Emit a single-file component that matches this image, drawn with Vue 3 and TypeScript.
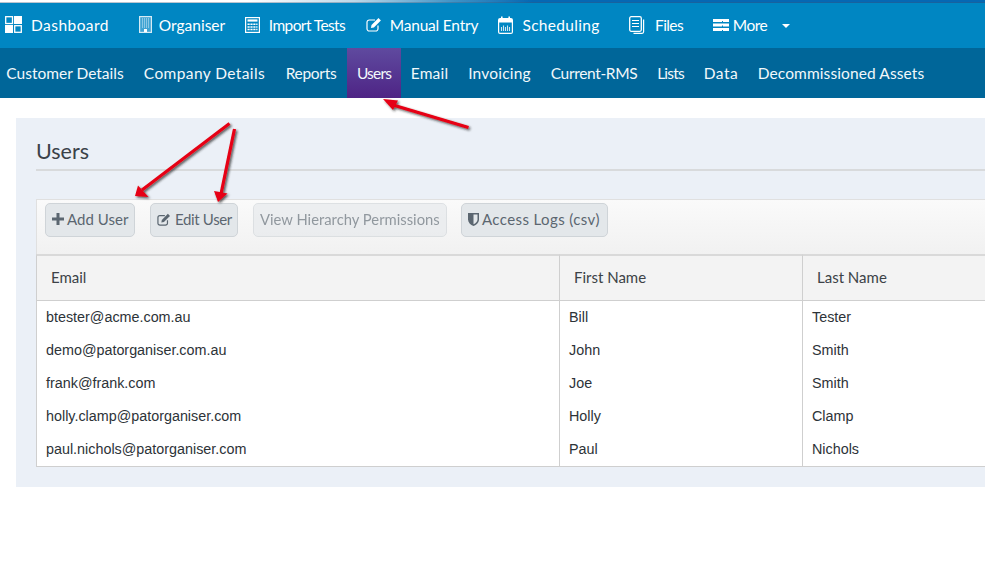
<script setup lang="ts">
const mainNav = [
  { label: 'Dashboard', icon: 'dash', cls: 'n-dash', w: 78, ls: 0.45 },
  { label: 'Organiser', icon: 'org', cls: 'n-org', w: 66, ls: 0 },
  { label: 'Import Tests', icon: 'calc', cls: 'n-imp', w: 78, ls: -0.6 },
  { label: 'Manual Entry', icon: 'edit', cls: 'n-man', w: 88, ls: -0.2 },
  { label: 'Scheduling', icon: 'cal', cls: 'n-sch', w: 78, ls: 0.3 },
  { label: 'Files', icon: 'files', cls: 'n-fil', w: 28, ls: -0.6 },
]
const subNav = [
  { label: 'Customer Details', w: 134, ls: 0 },
  { label: 'Company Details', w: 141, ls: 0.4 },
  { label: 'Reports', w: 72, ls: -0.3 },
  { label: 'Users', w: 54, ls: -0.8 },
  { label: 'Email', w: 57, ls: 0.2 },
  { label: 'Invoicing', w: 83, ls: 0.2 },
  { label: 'Current-RMS', w: 106, ls: -0.35 },
  { label: 'Lists', w: 47, ls: -0.8 },
  { label: 'Data', w: 54, ls: 0.5 },
  { label: 'Decommissioned Assets', w: 186, ls: 0.1 },
]
const rows = [
  ['btester@acme.com.au', 'Bill', 'Tester'],
  ['demo@patorganiser.com.au', 'John', 'Smith'],
  ['frank@frank.com', 'Joe', 'Smith'],
  ['holly.clamp@patorganiser.com', 'Holly', 'Clamp'],
  ['paul.nichols@patorganiser.com', 'Paul', 'Nichols'],
]
</script>

<template>
  <div class="page">
    <div class="strip"></div>
    <nav class="main">
      <a v-for="n in mainNav" :key="n.label" class="mi" :class="n.cls">
        <svg v-if="n.icon === 'dash'" class="ic" width="17" height="17" viewBox="0 0 17 17">
          <rect x="0.7" y="0.7" width="6.800" height="6.800" fill="none" stroke="#fff" stroke-width="1.300"/>
          <rect x="9" y="0" width="8" height="8" fill="#fff"/>
          <rect x="0" y="9" width="8" height="8" fill="#fff"/>
          <rect x="9.700" y="9.700" width="6.600" height="6.600" fill="none" stroke="#fff" stroke-width="1.300"/>
        </svg>
        <svg v-else-if="n.icon === 'org'" class="ic" width="13" height="17" viewBox="0 0 13 17">
          <rect x="0.6" y="0.6" width="11.800" height="15.800" fill="#3fa3d3" stroke="#d5ebf5" stroke-width="1.200"/>
          <path d="M3 3h7M3 5h7M3 7h7M3 9h7M3 11h7" stroke="#d5ebf5" stroke-width="1.100" stroke-dasharray="1 1"/>
          <rect x="5" y="13" width="3" height="3" fill="#fff"/>
        </svg>
        <svg v-else-if="n.icon === 'calc'" class="ic" width="15" height="16" viewBox="0 0 15 16">
          <rect x="0.6" y="0.6" width="13.800" height="14.800" fill="none" stroke="#fff" stroke-width="1.200"/>
          <rect x="2.500" y="2.400" width="10" height="2.200" fill="#fff"/>
          <path d="M2.500 7.300h10M2.500 9.900h10M2.500 12.500h10" stroke="#fff" stroke-width="1.500" stroke-dasharray="2.200 .7" fill="none"/>
        </svg>
        <svg v-else-if="n.icon === 'edit'" class="ic" width="16" height="15" viewBox="0 0 16 15">
          <path d="M12 8.500v3.200A2.300 2.300 0 0 1 9.700 14H3.300A2.300 2.300 0 0 1 1 11.700V5.300A2.300 2.300 0 0 1 3.300 3H9" fill="none" stroke="#fff" stroke-width="1.200"/>
          <path d="M5.500 8 12.500 1l2.400 2.400-7 7-3 .6z" fill="#fff"/>
        </svg>
        <svg v-else-if="n.icon === 'cal'" class="ic" width="15" height="18" viewBox="0 0 15 18">
          <rect x="0.6" y="2.600" width="13.800" height="14.800" rx="1.500" fill="none" stroke="#fff" stroke-width="1.200"/>
          <rect x="1" y="3" width="13" height="3.500" fill="#fff"/>
          <rect x="3" y="0.5" width="1.600" height="4" fill="#fff"/>
          <rect x="10.400" y="0.5" width="1.600" height="4" fill="#fff"/>
          <path d="M3.500 15V11M5.500 15V9.500M7.500 15V11M9.500 15V9.500M11.500 15V11" stroke="#cfe6f2" stroke-width="1.100"/>
        </svg>
        <svg v-else class="ic" width="16" height="18" viewBox="0 0 16 18">
          <rect x="0.7" y="0.7" width="11.600" height="14.600" rx="1.500" fill="none" stroke="#fff" stroke-width="1.300"/>
          <path d="M3 4.500h7M3 7.500h7M3 10.500h7" stroke="#fff" stroke-width="1.200"/>
          <path d="M14.600 3.500v12.300a1.500 1.500 0 0 1-1.500 1.500H4.500" fill="none" stroke="#fff" stroke-width="1.200"/>
        </svg>
        <span class="ml" :style="{ width: n.w + 'px', letterSpacing: n.ls + 'px' }">{{ n.label }}</span>
      </a>
      <a class="mi n-more">
        <svg class="ic" width="16" height="12" viewBox="0 0 16 12">
          <path d="M0 0h16v3H10V2H9v1H0zM0 4.500h16v3H10v-1H9v1H0zM0 9h16v3H10v-1H9v1H0z" fill="#fff"/>
        </svg>
        <span class="ml more-label">More</span>
        <i class="caret"></i>
      </a>
    </nav>
    <nav class="sub">
      <a
        v-for="s in subNav"
        :key="s.label"
        class="si"
        :class="{ active: s.label === 'Users' }"
        :style="{ width: s.w + 'px', letterSpacing: s.ls + 'px' }"
      >{{ s.label }}</a>
    </nav>

    <main class="panel">
      <h1>Users</h1>
      <div class="toolbar">
        <button class="btn b-add">
          <svg width="12" height="12" viewBox="0 0 12 12"><path d="M4.500 0h3v4.500H12v3H7.500V12h-3V7.500H0v-3h4.500z" fill="#5b6670"/></svg>
          Add User
        </button>
        <button class="btn b-edit">
          <svg width="14" height="13" viewBox="0 0 16 15">
            <path d="M12 8.500v3.200A2.300 2.300 0 0 1 9.700 14H3.300A2.300 2.300 0 0 1 1 11.700V5.300A2.300 2.300 0 0 1 3.300 3H9" fill="none" stroke="#5b6670" stroke-width="1.400"/>
            <path d="M5.500 8 12.500 1l2.400 2.400-7 7-3 .6z" fill="#5b6670"/>
          </svg>
          Edit User
        </button>
        <button class="btn b-view">View Hierarchy Permissions</button>
        <button class="btn b-log">
          <svg width="11" height="13" viewBox="0 0 11 13"><path d="M0 0h11v6.500c0 3-2.500 5.300-5.500 6.500C2.500 11.800 0 9.500 0 6.500z" fill="#5b6670"/><path d="M5.500 1.500h4v5c0 2-1.800 3.800-4 4.800z" fill="#e3e7ea"/></svg>
          Access Logs (csv)
        </button>
      </div>
      <table class="grid">
        <colgroup><col class="c1" /><col class="c2" /><col /></colgroup>
        <thead>
          <tr><th>Email</th><th>First Name</th><th>Last Name</th></tr>
        </thead>
        <tbody>
          <tr v-for="r in rows" :key="r[0]">
            <td v-for="c in r" :key="c">{{ c }}</td>
          </tr>
        </tbody>
      </table>
    </main>

    <svg class="arrows" width="985" height="583" viewBox="0 0 985 583">
      <defs>
        <filter id="sh" x="-30%" y="-30%" width="160%" height="160%">
          <feDropShadow dx="1.500" dy="1.500" stdDeviation="1.200" flood-color="#222" flood-opacity="0.75"/>
        </filter>
      </defs>
      <g filter="url(#sh)">
        <path d="M468.500 127.500 393 105" stroke="#e60012" stroke-width="3.200" fill="none"/>
        <path d="M383 99 398 100.500 393 110z" fill="#e60012"/>
        <path d="M229.500 123.500 142 190" stroke="#e60012" stroke-width="3.200" fill="none"/>
        <path d="M135 196 138 185.500 148.500 197z" fill="#e60012"/>
        <path d="M234.500 129 221 194" stroke="#e60012" stroke-width="3.200" fill="none"/>
        <path d="M218 202 214 191 227.500 193.500z" fill="#e60012"/>
      </g>
    </svg>
  </div>
</template>

<style>
html, body { margin: 0; background: #fff; }
</style>

<style scoped>
.page {
  position: relative;
  width: 985px;
  height: 583px;
  overflow: hidden;
  background: #fff;
  font-family: Lato, "Open Sans", sans-serif;
}
.strip {
  height: 3px;
  background: linear-gradient(90deg, #ffffff 0%, #ffffff 25%, #bcd8e8 36%, #3f93c6 46%, #0668b3 54%, #0668b3 100%);
  box-shadow: inset 0 -1px 0 rgba(60, 90, 120, 0.35);
}
.main {
  height: 45px;
  box-sizing: border-box;
  padding-bottom: 2px;
  background: #0086c2;
  display: flex;
  align-items: center;
  color: #fff;
  font-size: 15.500px;
}
.mi { display: flex; align-items: center; white-space: nowrap; }
.ic { flex: none; }
.ml { display: flex; justify-content: center; }
.n-dash { margin-left: 5px; gap: 9px; }
.n-org { margin-left: 30px; gap: 7px; }
.n-imp { margin-left: 20px; gap: 8px; }
.n-man { margin-left: 20px; gap: 8px; }
.n-sch { margin-left: 20px; gap: 9px; }
.n-fil { margin-left: 29px; gap: 10px; }
.n-more { margin-left: 30px; gap: 4px; }
.more-label { width: 34px; letter-spacing: -0.5px; }
.caret {
  margin-left: 11px;
  margin-top: 2px;
  width: 0;
  height: 0;
  border-left: 4px solid transparent;
  border-right: 4px solid transparent;
  border-top: 4px solid #fff;
}
.sub {
  height: 50px;
  background: #006699;
  display: flex;
  align-items: stretch;
  color: #f2f8fb;
  font-size: 15.500px;
}
.si {
  flex: none;
  display: flex;
  align-items: center;
  justify-content: center;
  white-space: nowrap;
}
.si:first-child { padding-right: 4px; box-sizing: border-box; }
.si.active { background: linear-gradient(180deg, #5f4a9f 0%, #4e2485 100%); }
.panel {
  margin: 20px 0 0 16px;
  height: 369px;
  background: #ebf0f7;
  padding: 0 0 0 20px;
  box-sizing: border-box;
}
h1 {
  margin: 0;
  padding-top: 20px;
  height: 53px;
  box-sizing: border-box;
  line-height: 27px;
  font-size: 21.500px;
  font-weight: 400;
  color: #3a4249;
  border-bottom: 2px solid #d8dadc;
}
.toolbar {
  margin-top: 28px;
  height: 55px;
  box-sizing: border-box;
  background: linear-gradient(180deg, #fafafa 0%, #f1f1f1 100%);
  border: 1px solid #e0e0e0;
  border-right: 0;
  border-bottom: 0;
  display: flex;
  align-items: flex-start;
  padding: 3px 0 0 8px;
}
.btn {
  height: 34px;
  box-sizing: border-box;
  background: #e3e7ea;
  border: 1px solid #cfd4d8;
  border-radius: 5px;
  font: 400 15px Lato, "Open Sans", sans-serif;
  color: #5b6670;
  padding: 0 6px 2px;
  display: flex;
  align-items: center;
  gap: 3px;
  white-space: nowrap;
}
.btn svg { flex: none; }
.b-add { width: 90px; letter-spacing: 0.05px; }
.b-edit { width: 88px; margin-left: 15px; gap: 4px; letter-spacing: -0.35px; }
.b-view { width: 194px; margin-left: 15px; opacity: 0.65; background: #e6e9ec; font-size: 14.800px; }
.b-log { width: 147px; margin-left: 14px; letter-spacing: 0.4px; }
.grid {
  width: 949px;
  border-collapse: separate;
  border-spacing: 0;
  table-layout: fixed;
  background: #fff;
}
.c1 { width: 523px; }
.c2 { width: 243px; }
th {
  height: 47px;
  box-sizing: border-box;
  background: #f3f3f3;
  border-top: 2px solid #d9d9d9;
  border-bottom: 1px solid #cfcfcf;
  border-left: 1px solid #cfcfcf;
  padding: 0 0 3px 14px;
  text-align: left;
  font-size: 15px;
  font-weight: 400;
  color: #3c4247;
}
td {
  height: 33px;
  box-sizing: border-box;
  padding: 0 0 2px 9px;
  border-left: 1px solid #cfcfcf;
  font: 400 14.350px "Liberation Sans", Arial, sans-serif;
  color: #2d3338;
  white-space: nowrap;
}
tbody tr:last-child td { border-bottom: 1px solid #cfcfcf; height: 34px; }
.arrows { position: absolute; left: 0; top: 0; pointer-events: none; }
</style>
